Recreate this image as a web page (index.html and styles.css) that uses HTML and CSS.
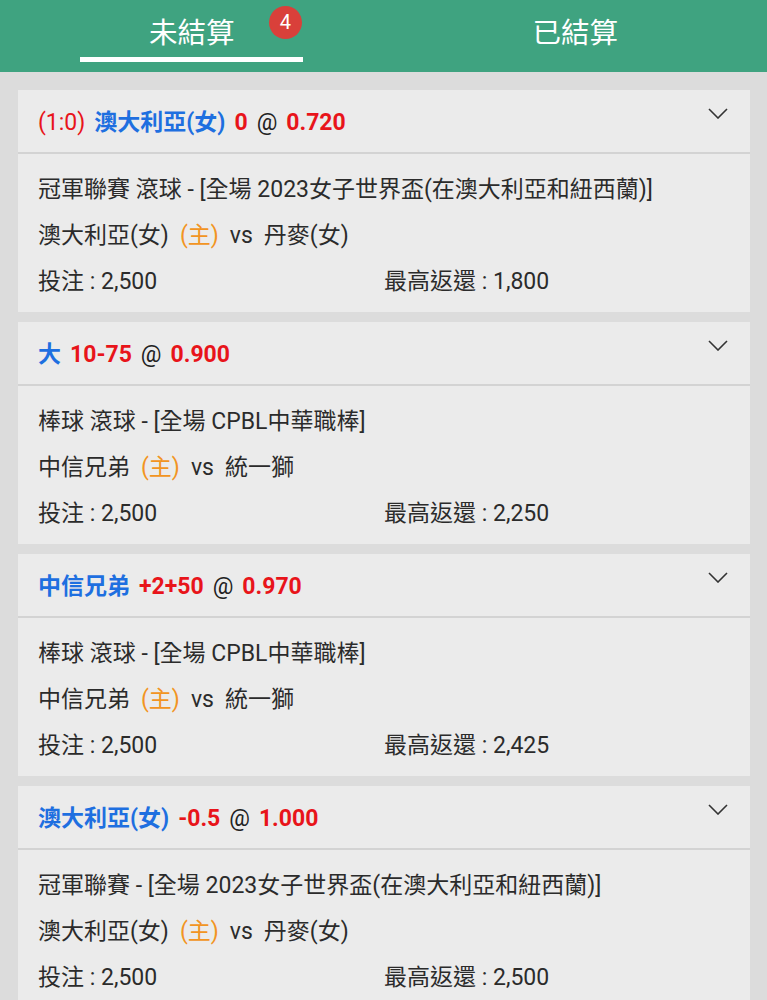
FILE: index.html
```html
<!DOCTYPE html>
<html lang="zh-Hant">
<head>
<meta charset="utf-8">
<link rel="stylesheet" href="styles.css">
</head>
<body>
<header class="tabs">
  <div class="tab active">
    <span class="tab-label">未結算<span class="badge">4</span></span>
    <span class="underline"></span>
  </div>
  <div class="tab">
    <span class="tab-label">已結算</span>
  </div>
</header>
<main class="list">
  <section class="card">
    <div class="card-head">
      <div class="title">
        <span class="red">(1:0)</span>
        <span class="blue b">澳大利亞(女)</span>
        <span class="red b">0</span>
        <span class="at">@</span>
        <span class="red b">0.720</span>
      </div>
      <svg class="chev" viewBox="0 0 20 11" width="20" height="11"><path d="M1 1 L10 10 L19 1" fill="none" stroke="#333" stroke-width="1.6"/></svg>
    </div>
    <div class="card-body">
      <div class="line">冠軍聯賽 滾球 - [全場 2023女子世界盃(在澳大利亞和紐西蘭)]</div>
      <div class="line teams"><span>澳大利亞(女)</span><span class="home">(主)</span><span>vs</span><span>丹麥(女)</span></div>
      <div class="line stats"><span>投注 : 2,500</span><span>最高返還 : 1,800</span></div>
    </div>
  </section>
  <section class="card">
    <div class="card-head">
      <div class="title">
        <span class="blue b">大</span>
        <span class="red b">10-75</span>
        <span class="at">@</span>
        <span class="red b">0.900</span>
      </div>
      <svg class="chev" viewBox="0 0 20 11" width="20" height="11"><path d="M1 1 L10 10 L19 1" fill="none" stroke="#333" stroke-width="1.6"/></svg>
    </div>
    <div class="card-body">
      <div class="line">棒球 滾球 - [全場 CPBL中華職棒]</div>
      <div class="line teams"><span>中信兄弟</span><span class="home">(主)</span><span>vs</span><span>統一獅</span></div>
      <div class="line stats"><span>投注 : 2,500</span><span>最高返還 : 2,250</span></div>
    </div>
  </section>
  <section class="card">
    <div class="card-head">
      <div class="title">
        <span class="blue b">中信兄弟</span>
        <span class="red b">+2+50</span>
        <span class="at">@</span>
        <span class="red b">0.970</span>
      </div>
      <svg class="chev" viewBox="0 0 20 11" width="20" height="11"><path d="M1 1 L10 10 L19 1" fill="none" stroke="#333" stroke-width="1.6"/></svg>
    </div>
    <div class="card-body">
      <div class="line">棒球 滾球 - [全場 CPBL中華職棒]</div>
      <div class="line teams"><span>中信兄弟</span><span class="home">(主)</span><span>vs</span><span>統一獅</span></div>
      <div class="line stats"><span>投注 : 2,500</span><span>最高返還 : 2,425</span></div>
    </div>
  </section>
  <section class="card">
    <div class="card-head">
      <div class="title">
        <span class="blue b">澳大利亞(女)</span>
        <span class="red b">-0.5</span>
        <span class="at">@</span>
        <span class="red b">1.000</span>
      </div>
      <svg class="chev" viewBox="0 0 20 11" width="20" height="11"><path d="M1 1 L10 10 L19 1" fill="none" stroke="#333" stroke-width="1.6"/></svg>
    </div>
    <div class="card-body">
      <div class="line">冠軍聯賽 - [全場 2023女子世界盃(在澳大利亞和紐西蘭)]</div>
      <div class="line teams"><span>澳大利亞(女)</span><span class="home">(主)</span><span>vs</span><span>丹麥(女)</span></div>
      <div class="line stats"><span>投注 : 2,500</span><span>最高返還 : 2,500</span></div>
    </div>
  </section>
</main>
</body>
</html>
```
FILE: styles.css
```css
* { box-sizing: border-box; }
html, body {
  margin: 0;
  padding: 0;
  background: #dcdcdc;
  font-family: Roboto, "Noto Sans CJK TC", sans-serif;
  color: #2b2b2b;
  overflow: hidden;
}
.tabs {
  display: grid;
  grid-template-columns: 1fr 1fr;
  height: 72px;
  background: #3fa380;
}
.tab {
  position: relative;
  display: flex;
  justify-content: center;
  align-items: center;
  padding-bottom: 4px;
}
.tab-label {
  position: relative;
  color: #fff;
  font-size: 28.5px;
  line-height: 1;
}
.badge {
  position: absolute;
  left: 120px;
  top: -14px;
  width: 33px;
  height: 33px;
  border-radius: 50%;
  background: #d9403a;
  color: #fff;
  font-size: 20px;
  line-height: 33px;
  text-align: center;
}
.underline {
  position: absolute;
  left: 80px;
  width: 223px;
  bottom: 10px;
  height: 5px;
  background: #fff;
}
.list {
  display: flex;
  flex-direction: column;
  gap: 10px;
  padding: 18px 17px 0 18px;
}
.card {
  background: #ebebeb;
  flex-shrink: 0;
}
.card-head {
  height: 64px;
  display: flex;
  align-items: center;
  justify-content: space-between;
  padding: 0 22px 0 20px;
  border-bottom: 2px solid #d3d3d3;
}
.title {
  display: flex;
  align-items: center;
  gap: 9px;
  font-size: 23px;
  line-height: 1;
  padding-top: 2px;
}
.chev {
  align-self: flex-start;
  margin-top: 18px;
}
.b { font-weight: 700; }
.red { color: #e8141a; }
.blue { color: #1e6fe0; }
.at { color: #222; }
.card-body {
  padding: 13px 20px 7px 20px;
  font-size: 23px;
}
.line {
  height: 46px;
  line-height: 46px;
  white-space: nowrap;
}
.teams {
  display: flex;
  gap: 11px;
}
.home { color: #f29422; }
.stats {
  display: grid;
  grid-template-columns: 1fr 1fr;
}
```
